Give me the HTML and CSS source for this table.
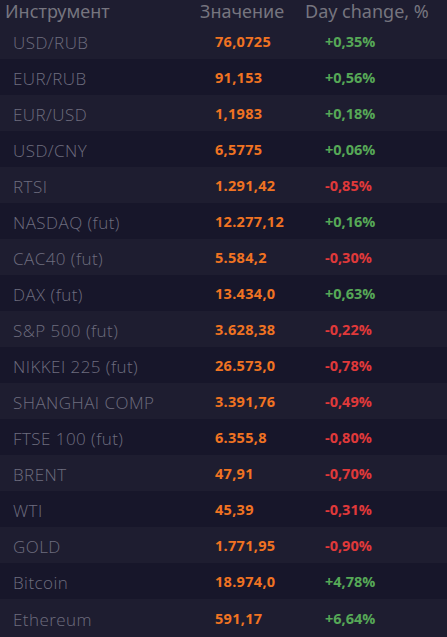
FILE: index.html
```html
<!DOCTYPE html>
<html lang="ru">
<head>
<meta charset="utf-8">
<link rel="stylesheet" href="styles.css">
</head>
<body>
<div class="table">
  <div class="head">
    <span class="h-name">Инструмент</span>
    <span class="h-val">Значение</span>
    <span class="h-chg">Day change, %</span>
  </div>
  <div class="row"><span class="name">USD/RUB</span><span class="val">76,0725</span><span class="chg up">+0,35%</span></div>
  <div class="row"><span class="name">EUR/RUB</span><span class="val">91,153</span><span class="chg up">+0,56%</span></div>
  <div class="row"><span class="name">EUR/USD</span><span class="val">1,1983</span><span class="chg up">+0,18%</span></div>
  <div class="row"><span class="name">USD/CNY</span><span class="val">6,5775</span><span class="chg up">+0,06%</span></div>
  <div class="row"><span class="name">RTSI</span><span class="val">1.291,42</span><span class="chg down">-0,85%</span></div>
  <div class="row"><span class="name">NASDAQ (fut)</span><span class="val">12.277,12</span><span class="chg up">+0,16%</span></div>
  <div class="row"><span class="name">CAC40 (fut)</span><span class="val">5.584,2</span><span class="chg down">-0,30%</span></div>
  <div class="row"><span class="name">DAX (fut)</span><span class="val">13.434,0</span><span class="chg up">+0,63%</span></div>
  <div class="row"><span class="name">S&amp;P 500 (fut)</span><span class="val">3.628,38</span><span class="chg down">-0,22%</span></div>
  <div class="row"><span class="name">NIKKEI 225 (fut)</span><span class="val">26.573,0</span><span class="chg down">-0,78%</span></div>
  <div class="row"><span class="name">SHANGHAI COMP</span><span class="val">3.391,76</span><span class="chg down">-0,49%</span></div>
  <div class="row"><span class="name">FTSE 100 (fut)</span><span class="val">6.355,8</span><span class="chg down">-0,80%</span></div>
  <div class="row"><span class="name">BRENT</span><span class="val">47,91</span><span class="chg down">-0,70%</span></div>
  <div class="row"><span class="name">WTI</span><span class="val">45,39</span><span class="chg down">-0,31%</span></div>
  <div class="row"><span class="name">GOLD</span><span class="val">1.771,95</span><span class="chg down">-0,90%</span></div>
  <div class="row"><span class="name">Bitcoin</span><span class="val">18.974,0</span><span class="chg up">+4,78%</span></div>
  <div class="row"><span class="name">Ethereum</span><span class="val">591,17</span><span class="chg up">+6,64%</span></div>
</div>
</body>
</html>
```
FILE: styles.css
```css
html, body {
  margin: 0;
  padding: 0;
  background: #1e1d30;
}
.table {
  width: 447px;
  height: 637px;
  display: flex;
  flex-direction: column;
  background: #1e1d30;
}
.head {
  height: 23px;
  display: flex;
  align-items: center;
  font-family: "Noto Sans", sans-serif;
  font-size: 18px;
  color: #76757f;
  line-height: 23px;
}
.h-name { width: 195px; padding-left: 5px; }
.h-val { width: 105px; }
.h-chg { flex: 1; }
.row {
  height: 36px;
  flex: none;
  display: flex;
  align-items: center;
}
.row:nth-child(odd) { background: #17162a; }
.row:last-child { flex: 1; }
.name {
  width: 202px;
  padding-left: 13px;
  font-family: "Open Sans", sans-serif;
  font-weight: 300;
  font-size: 17px;
  letter-spacing: 0.45px;
  color: #6e6d7f;
  padding-top: 3px;
}
.val {
  width: 110px;
  font-family: "Open Sans", sans-serif;
  font-weight: 700;
  font-size: 14.5px;
  letter-spacing: 0.3px;
  color: #f07322;
  padding-top: 1px;
}
.chg {
  font-family: "Open Sans", sans-serif;
  font-weight: 700;
  font-size: 14.5px;
  padding-top: 1px;
}
.up { color: #56a857; }
.down { color: #e0393a; }
```
